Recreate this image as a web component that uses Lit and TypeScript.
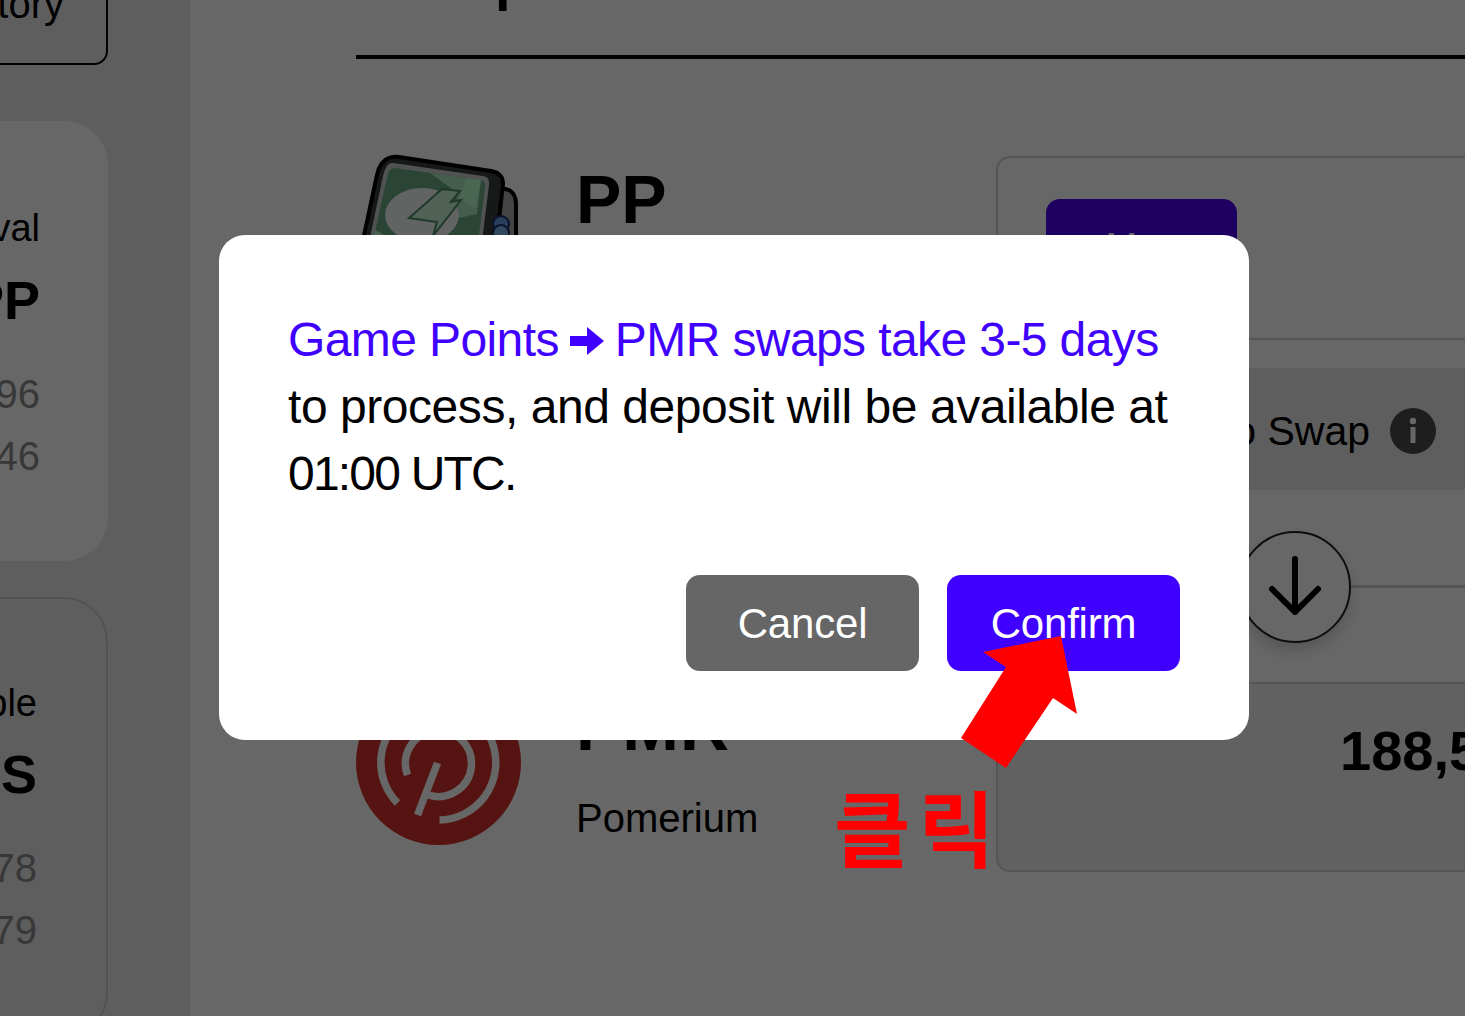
import { css, html, LitElement } from "lit";
import { customElement } from "lit/decorators.js";

@customElement("app-root")
export class AppRoot extends LitElement {
  static styles = css`
    :host {
      display: flex;
      position: relative;
      width: 1465px;
      height: 1016px;
      overflow: hidden;
      background: #fff;
      color: #000;
      font-family: "Liberation Sans", Arial, sans-serif;
    }

    .sidebar {
      flex: 0 0 190px;
      display: flex;
      flex-direction: column;
      background: #e8e8e8;
      overflow: hidden;
    }

    .history {
      box-sizing: border-box;
      width: 208px;
      height: 122px;
      margin: -57px 0 0 -100px;
      flex: none;
      display: flex;
      justify-content: flex-end;
      align-items: center;
      padding-right: 42px;
      border: 2px solid #000;
      border-radius: 14px;
      font-size: 40px;
      white-space: nowrap;
    }

    .stat {
      box-sizing: border-box;
      width: 108px;
      height: 440px;
      flex: none;
      display: flex;
      flex-direction: column;
      align-items: flex-end;
      padding: 84px 68px 0 0;
      border-radius: 0 44px 44px 0;
      white-space: nowrap;
    }

    .stat.fill {
      margin-top: 56px;
      background: #ffffff;
    }

    .stat.line {
      margin-top: 36px;
      padding-top: 81px;
      border: 2px solid #cbcbcb;
      border-left: none;
      padding-right: 69px;
    }

    .stat .label {
      font-size: 38px;
      line-height: 46px;
    }

    .stat .unit {
      margin-top: 19px;
      font-size: 54px;
      line-height: 60px;
      font-weight: 700;
    }

    .stat.line .unit {
      margin-top: 18px;
    }

    .stat .num {
      margin-top: 16px;
      font-size: 40px;
      line-height: 46px;
      color: #8c8c8c;
    }

    .stat .unit + .num {
      margin-top: 41px;
    }

    .main {
      flex: 1;
      min-width: 0;
      padding-left: 166px;
    }

    .tabs {
      box-sizing: border-box;
      height: 59px;
      width: 1200px;
      border-bottom: 4px solid #000;
      overflow: hidden;
    }

    .tabs span {
      display: block;
      margin: -52px 0 0 27px;
      font-size: 56px;
      line-height: 64px;
      font-weight: 700;
    }

    .swap {
      display: grid;
      grid-template-columns: 640px 640px;
    }

    .tokens {
      display: flex;
      flex-direction: column;
    }

    .token {
      display: flex;
      gap: 55px;
    }

    .token.pp {
      margin-top: 91px;
      height: 200px;
    }

    .token.pmr {
      margin-top: 330px;
    }

    .token svg {
      flex: none;
      display: block;
    }

    .token .name {
      font-size: 68px;
      line-height: 70px;
      font-weight: 700;
      margin-top: 14px;
    }

    .token.pmr .name {
      margin-top: 11px;
      letter-spacing: 1px;
    }

    .token .full {
      font-size: 40px;
      line-height: 46px;
      margin-top: 34px;
    }

    .panels {
      display: flex;
      flex-direction: column;
    }

    .box {
      box-sizing: border-box;
      height: 184px;
      margin-top: 97px;
      padding: 41px 0 0 48px;
      border: 2px solid #d2d2d2;
      border-radius: 14px;
    }

    .max {
      width: 191px;
      height: 96px;
      border-radius: 14px;
      background: #4a00ed;
      color: #fff;
      font-size: 38px;
      display: flex;
      justify-content: center;
      align-items: center;
    }

    .auto {
      box-sizing: border-box;
      height: 122px;
      margin-top: 28px;
      padding-top: 4px;
      background: #e8e8e8;
      display: flex;
      align-items: center;
      gap: 20px;
      font-size: 41px;
      white-space: nowrap;
    }

    .auto .label {
      flex: 0 0 374px;
      display: flex;
      justify-content: flex-end;
    }

    .auto svg {
      flex: none;
      display: block;
    }

    .divider {
      height: 192px;
      display: flex;
      align-items: center;
      position: relative;
    }

    .divider::before {
      content: "";
      flex: 1;
      height: 3px;
      background: #d2d2d2;
    }

    .circle {
      position: absolute;
      left: 243px;
      top: 41px;
      box-sizing: border-box;
      width: 112px;
      height: 112px;
      border-radius: 50%;
      border: 2px solid #222;
      background: #fff;
      box-shadow: 0 8px 14px rgba(0, 0, 0, 0.16);
      display: flex;
      justify-content: center;
      align-items: center;
    }

    .box.amount {
      height: 190px;
      margin-top: 0;
      padding: 36px 0 0 342px;
      background: #f0f0f0;
      font-size: 56px;
      line-height: 62px;
      font-weight: 700;
      white-space: nowrap;
    }

    .overlay {
      position: absolute;
      inset: 0;
      background: rgba(0, 0, 0, 0.595);
      display: flex;
      align-items: flex-start;
      padding: 235px 0 0 219px;
    }

    .dialog {
      box-sizing: border-box;
      width: 1030px;
      height: 505px;
      padding: 71px 69px 0;
      border-radius: 26px;
      background: #fff;
    }

    .message {
      font-size: 48px;
      line-height: 67px;
      letter-spacing: -0.45px;
      white-space: nowrap;
    }

    .message .accent {
      color: #4000ff;
      letter-spacing: -0.6px;
    }

    .message .time {
      letter-spacing: -1.8px;
    }

    .message svg {
      display: inline-block;
      margin: 0 11px;
      vertical-align: 1px;
    }

    .buttons {
      display: flex;
      justify-content: flex-end;
      gap: 28px;
      margin-top: 68px;
    }

    button {
      width: 233px;
      height: 96px;
      padding: 2px 0 0;
      border: none;
      border-radius: 14px;
      color: #fff;
      font-family: inherit;
      font-size: 42px;
      letter-spacing: -0.2px;
    }

    .cancel-button {
      background: #666666;
    }

    .confirm-button {
      background: #4000ff;
    }

    .pointer {
      position: absolute;
      left: 950px;
      top: 630px;
    }

    .click-note {
      position: absolute;
      left: 834px;
      top: 775px;
      color: #ff0000;
      font-family: "Noto Sans CJK KR", sans-serif;
      font-size: 83px;
      line-height: 100px;
      letter-spacing: 8px;
      font-weight: 700;
      white-space: nowrap;
    }
  `;

  private renderStat(kind: string, label: string, unit: string, a: string, b: string) {
    return html`
      <div class="stat ${kind}">
        <div class="label">${label}</div>
        <div class="unit">${unit}</div>
        <div class="num">${a}</div>
        <div class="num">${b}</div>
      </div>
    `;
  }

  private renderWallet() {
    return html`
      <svg width="165" height="165" viewBox="2 0 165 165">
        <path d="M148 38 L155 40 Q162 44 162 54 L162 132 L130 132 Z" fill="#a8a8a8" stroke="#000" stroke-width="4" />
        <path
          d="M35 8 Q39 6 45 7 L137 21 Q149 23 149 34 L136 150 L0 132 L23 25 Q26 11 35 8 Z"
          fill="#3a3f3c"
          stroke="#000"
          stroke-width="4"
        />
        <path d="M39 13 L129 26 Q136 27 135 35 L122 140 L8 126 L29 26 Q32 12 39 13 Z" fill="#c8cecb" />
        <path d="M41 18 L127 30 Q132 31 131 37 L119 134 L12 122 L33 28 Q35 17 41 18 Z" fill="#68a883" />
        <path d="M76 23 L127 30 L123 64 L105 68 L102 42 Z" fill="#a8e6bf" />
        <path d="M113 28 L127 30 L121 58 L105 48 Z" fill="#b8ffd0" />
        <path d="M12 122 L21 80 L62 102 L72 132 Z" fill="#b4f0c8" />
        <ellipse cx="68" cy="65" rx="37" ry="27" fill="#ffffff" opacity="0.9" />
        <path
          d="M88 39 L106 41 L97 52 L107 50 L79 86 L83 72 L55 68 Z"
          fill="#c6f2d6"
          stroke="#4f8a68"
          stroke-width="2"
        />
        <circle cx="147" cy="74" r="8" fill="#6a9be8" stroke="#1a2b66" stroke-width="2" />
        <circle cx="147" cy="83" r="8" fill="#7fb0f0" stroke="#1a2b66" stroke-width="2" />
      </svg>
    `;
  }

  private renderPomerium() {
    return html`
      <svg width="165" height="165" viewBox="0 0 165 165">
        <circle cx="82.5" cy="82.5" r="82.5" fill="#d2312a" />
        <g fill="none" stroke="#fff" stroke-width="7.5">
          <path d="M41.5 123 A57.5 57.5 0 1 1 83.5 140" />
          <path d="M51.5 95 A33 33 0 1 1 72.5 115" />
          <path d="M81.5 83 L61.5 135" />
        </g>
      </svg>
    `;
  }

  render() {
    return html`
      <aside class="sidebar">
        <div class="history">History</div>
        ${this.renderStat("fill", "Approval", "PP", "96", "46")}
        ${this.renderStat("line", "Available", "S", "78", "79")}
      </aside>

      <main class="main">
        <div class="tabs"><span>Swap</span></div>
        <div class="swap">
          <div class="tokens">
            <div class="token pp">
              ${this.renderWallet()}
              <div>
                <div class="name">PP</div>
                <div class="full">Game Points</div>
              </div>
            </div>
            <div class="token pmr">
              ${this.renderPomerium()}
              <div>
                <div class="name">PMR</div>
                <div class="full">Pomerium</div>
              </div>
            </div>
          </div>
          <div class="panels">
            <div class="box"><div class="max">Max</div></div>
            <div class="auto">
              <span class="label"><span>Auto Swap</span></span>
              <svg width="46" height="46" viewBox="0 0 46 46">
                <circle cx="23" cy="23" r="23" fill="#4a4a4a" />
                <circle cx="23" cy="13" r="3.2" fill="#fff" />
                <rect x="20.5" y="19" width="5" height="16" fill="#fff" />
              </svg>
            </div>
            <div class="divider">
              <div class="circle">
                <svg width="56" height="62" viewBox="0 0 56 62">
                  <path
                    d="M28 3 V56 M5 33 L28 56 L51 33"
                    fill="none"
                    stroke="#000"
                    stroke-width="6"
                    stroke-linecap="round"
                    stroke-linejoin="round"
                  />
                </svg>
              </div>
            </div>
            <div class="box amount">188,500</div>
          </div>
        </div>
      </main>

      <div class="overlay">
        <div class="dialog">
          <div class="message">
            <span class="accent"
              >Game Points<svg width="34" height="28" viewBox="0 0 34 28">
                <path d="M0 9 H17 V0 L34 14 L17 28 V19 H0 Z" fill="#4000ff" /></svg
              >PMR swaps take 3-5 days</span
            ><br />
            to process, and deposit will be available at<br />
            <span class="time">01:00 UTC.</span>
          </div>
          <div class="buttons">
            <button class="cancel-button">Cancel</button>
            <button class="confirm-button">Confirm</button>
          </div>
        </div>
      </div>

      <svg class="pointer" width="140" height="150" viewBox="0 0 140 150">
        <polygon points="111,6 33,22 56,37 11,108 56,138 103,68 127,84" fill="#ff0000" />
      </svg>
      <div class="click-note">클릭</div>
    `;
  }
}
